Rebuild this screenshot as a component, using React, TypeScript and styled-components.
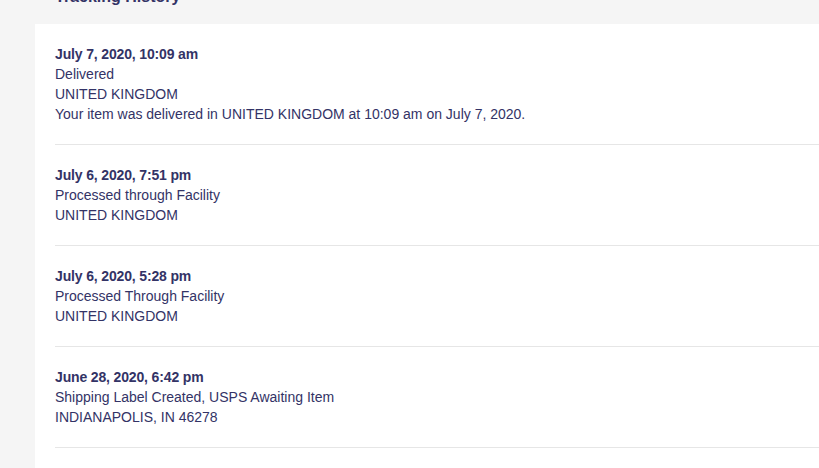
import styled, { createGlobalStyle } from "styled-components";

const GlobalStyle = createGlobalStyle`
  html, body {
    margin: 0;
    padding: 0;
    background: #f5f5f5;
    font-family: "Liberation Sans", Arial, sans-serif;
    color: #333366;
    overflow: hidden;
  }
`;

// page is scrolled a little, the heading sits half above the top edge
const Page = styled.div`
  padding-left: 35px;
  margin-top: -14px;
`;

const Heading = styled.h2`
  margin: 0 0 17px 20px;
  height: 21px;
  font-size: 16px;
  line-height: 21px;
  font-weight: 700;
  color: #333366;
`;

const Panel = styled.section`
  background: #fff;
  padding: 0 0 0 20px;
  min-height: 460px;
`;

const Entry = styled.div`
  padding: 20px 0;
  border-bottom: 1px solid #e6e6e6;
  font-size: 14px;
  line-height: 20px;
`;

const Stamp = styled.div`
  font-weight: 700;
  letter-spacing: -0.15px;
`;

const Line = styled.div``;

const events = [
  {
    when: "July 7, 2020, 10:09 am",
    lines: [
      "Delivered",
      "UNITED KINGDOM",
      "Your item was delivered in UNITED KINGDOM at 10:09 am on July 7, 2020.",
    ],
  },
  {
    when: "July 6, 2020, 7:51 pm",
    lines: ["Processed through Facility", "UNITED KINGDOM"],
  },
  {
    when: "July 6, 2020, 5:28 pm",
    lines: ["Processed Through Facility", "UNITED KINGDOM"],
  },
  {
    when: "June 28, 2020, 6:42 pm",
    lines: ["Shipping Label Created, USPS Awaiting Item", "INDIANAPOLIS, IN 46278"],
  },
];

export default function App() {
  return (
    <>
      <GlobalStyle />
      <Page>
        <Heading>Tracking History</Heading>
        <Panel>
          {events.map((e, i) => (
            <Entry key={i}>
              <Stamp>{e.when}</Stamp>
              {e.lines.map((l, j) => (
                <Line key={j}>{l}</Line>
              ))}
            </Entry>
          ))}
        </Panel>
      </Page>
    </>
  );
}
